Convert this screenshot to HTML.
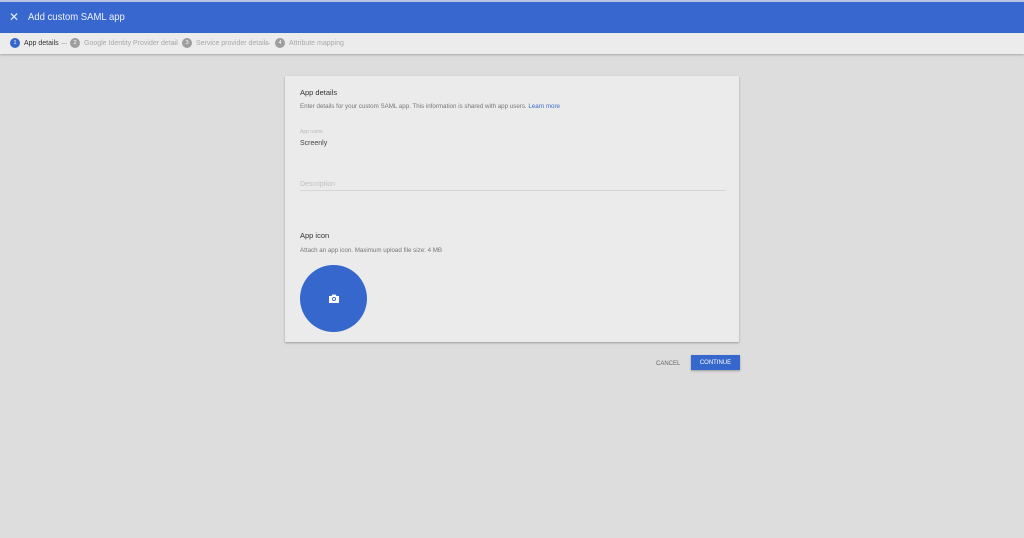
<!DOCTYPE html>
<html><head><style>
*{margin:0;padding:0;box-sizing:border-box}
body{width:1024px;height:538px;background:#dddddd;font-family:"Liberation Sans",sans-serif;position:relative;overflow:hidden}
.top{position:absolute;left:0;top:0;width:1024px;height:2px;background:#b9c3e6}
.hdr{position:absolute;left:0;top:2px;width:1024px;height:31px;background:#3868cf;color:#fff}
.hdr .x{position:absolute;left:9px;top:8px;font-size:12px;color:#e8eefc}
.hdr .t{position:absolute;left:28px;top:9px;font-size:9.5px;color:#eef2fc;transform:scaleY(1.1);transform-origin:left top}
.steps{position:absolute;left:0;top:33px;width:1024px;height:21px;background:#ececec;box-shadow:0 1px 2px rgba(0,0,0,.25);font-size:7px;color:#a9a9a9}
.s{position:absolute;top:7px;white-space:nowrap}
.c{position:absolute;top:5px;width:10px;height:10px;border-radius:50%;background:#9e9e9e;color:#fff;font-size:5.5px;display:flex;align-items:center;justify-content:center}
.ln{position:absolute;top:10px;height:1px;width:6px;background:#c4c4c4}
.card{position:absolute;left:285px;top:76px;width:454px;height:266px;background:#ebebeb;box-shadow:0 1px 2px rgba(0,0,0,.3)}
.h{position:absolute;left:15px;font-size:7.5px;color:#333}
.p{position:absolute;left:15px;font-size:6.2px;color:#777;white-space:nowrap}
.circ{position:absolute;left:15px;top:189px;width:67px;height:67px;border-radius:50%;background:#3667cd}
.btn{position:absolute;left:691px;top:355px;width:49px;height:15px;background:#3667cd;color:#fff;font-size:6px;display:flex;align-items:center;justify-content:center;box-shadow:0 1px 2px rgba(0,0,0,.3)}
.cancel{position:absolute;left:656px;top:361px;font-size:6px;color:#666}
</style></head><body>
<div class="top"></div>
<div class="hdr"><span class="x">✕</span><span class="t">Add custom SAML app</span></div>
<div class="steps">
<div class="c" style="left:10px;background:#3667cd">1</div><span class="s" style="left:24px;color:#333">App details</span>
<div class="ln" style="left:61px"></div>
<div class="c" style="left:70px">2</div><span class="s" style="left:84px">Google Identity Provider detail</span>
<div class="ln" style="left:171px"></div>
<div class="c" style="left:182px">3</div><span class="s" style="left:196px">Service provider details</span>
<div class="ln" style="left:264px"></div>
<div class="c" style="left:275px">4</div><span class="s" style="left:289px">Attribute mapping</span>
</div>
<div class="card">
<div class="h" style="top:12px">App details</div>
<div class="p" style="top:27px">Enter details for your custom SAML app. This information is shared with app users. <span style="color:#3b6cc4">Learn more</span></div>
<div class="p" style="top:53px;font-size:5px;color:#bbb">App name</div>
<div class="h" style="top:64px;font-size:7px;color:#444">Screenly</div>
<div class="p" style="top:105px;font-size:7px;color:#c0c0c0">Description</div>
<div style="position:absolute;left:15px;top:114px;width:426px;height:1px;background:#d6d6d6"></div>
<div class="h" style="top:155px">App icon</div>
<div class="p" style="top:171px">Attach an app icon. Maximum upload file size: 4 MB</div>
<div class="circ"><svg width="10" height="9" viewBox="0 0 10 9" style="position:absolute;left:29px;top:29px"><path d="M0 2h2.5l1-1.5h3l1 1.5H10v7H0z" fill="#fff"/><circle cx="5" cy="5" r="2" fill="#3667cd"/><circle cx="5" cy="5" r="1.1" fill="#fff"/></svg></div>
</div>
<span class="cancel">CANCEL</span>
<div class="btn">CONTINUE</div>
</body></html>
